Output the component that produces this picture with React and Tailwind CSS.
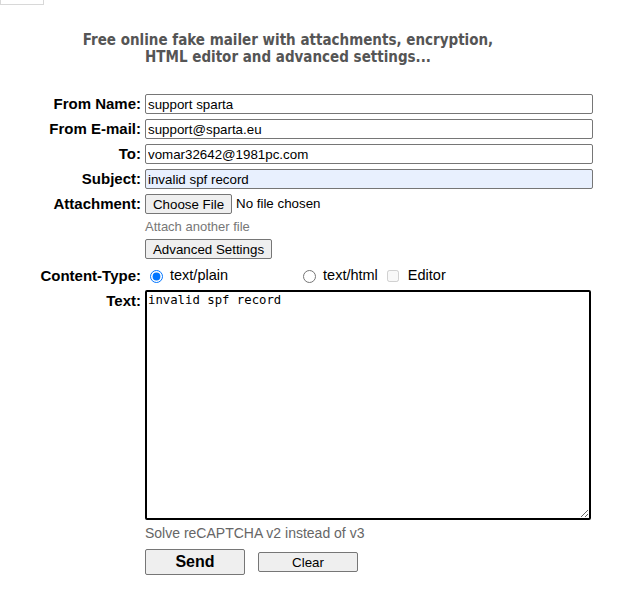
import React, { useState } from 'react';

const Label = ({ children, className = '' }) => (
  <div className={`text-right font-bold text-[15px] leading-[20px] text-black pr-[4px] ${className}`}>{children}</div>
);

const inputCls =
  'w-[448px] h-[20px] border border-[#767676] rounded-[2px] px-[2px] text-[13.33px] text-black outline-none';

const btnCls = 'border border-[#767676] rounded-[2px] bg-[#efefef] text-[13.33px] text-black';

const App = () => {
  const [text, setText] = useState('invalid spf record');

  return (
    <div className="w-[640px] h-[594px] bg-white relative font-['Liberation_Sans',Arial,sans-serif] text-black">
      {/* cut-off box at the top */}
      <div className="absolute left-0 top-[-20px] w-[44px] h-[25px] border border-[#d8d8d8]" />

      <div className="pt-[32px] text-center font-['DejaVu_Sans_Condensed','DejaVu_Sans',sans-serif] font-bold text-[15px] leading-[17px] text-[#555] w-[576px]">
        Free online fake mailer with attachments, encryption,
        <br />
        HTML editor and advanced settings...
      </div>

      <div className="mt-[28px] grid grid-cols-[145px_1fr] gap-y-[5px] items-center">
        <Label>From Name:</Label>
        <input className={inputCls} defaultValue="support sparta" />

        <Label>From E-mail:</Label>
        <input className={inputCls} defaultValue="support@sparta.eu" />

        <Label>To:</Label>
        <input className={inputCls} defaultValue="vomar32642@1981pc.com" />

        <Label>Subject:</Label>
        <input className={`${inputCls} bg-[#e8f0fe]`} defaultValue="invalid spf record" />

        <Label className="self-start">Attachment:</Label>
        <div className="flex flex-col items-start">
          <div className="flex items-center h-[20px] text-[13.33px]">
            <button className={`h-[20px] w-[87px] ${btnCls}`}>Choose File</button>
            <span className="ml-[4px]">No file chosen</span>
          </div>
          <div className="mt-[6px] text-[13px] leading-[14px] text-[#777]">Attach another file</div>
          <button className={`mt-[5px] h-[20px] w-[127px] ${btnCls}`}>Advanced Settings</button>
        </div>

        <Label className="pt-[2px]">Content-Type:</Label>
        <div className="flex items-center h-[20px] mt-[2px] text-[14.5px]">
          <input type="radio" name="ct" defaultChecked className="ml-[5px] mr-[7px] w-[13px] h-[13px] accent-[#0075ff]" />
          <span>text/plain</span>
          <input type="radio" name="ct" className="ml-[75px] mr-[7px] w-[13px] h-[13px]" />
          <span>text/html</span>
          <input type="checkbox" disabled className="ml-[9px] mr-[9px] w-[12px] h-[12px]" />
          <span>Editor</span>
        </div>

        <Label className="self-start">Text:</Label>
        <textarea
          autoFocus
          spellCheck
          value={text}
          onChange={(e) => setText(e.target.value)}
          className="-mt-[1px] w-[446px] h-[230px] border-2 border-black rounded-[2px] p-[1px] font-['DejaVu_Sans_Mono',monospace] text-[12.3px] leading-[15px] outline-none resize"
        />

        <div />
        <div className="text-[14px] leading-[16px] text-[#666]">Solve reCAPTCHA v2 instead of v3</div>

        <div />
        <div className="flex items-center mt-[3px]">
          <button className="w-[100px] h-[26px] border border-[#767676] rounded-[2px] bg-[#efefef] font-bold text-[16px]">
            Send
          </button>
          <button className={`ml-[13px] w-[100px] h-[20px] ${btnCls}`}>Clear</button>
        </div>
      </div>
    </div>
  );
};

export default App;
